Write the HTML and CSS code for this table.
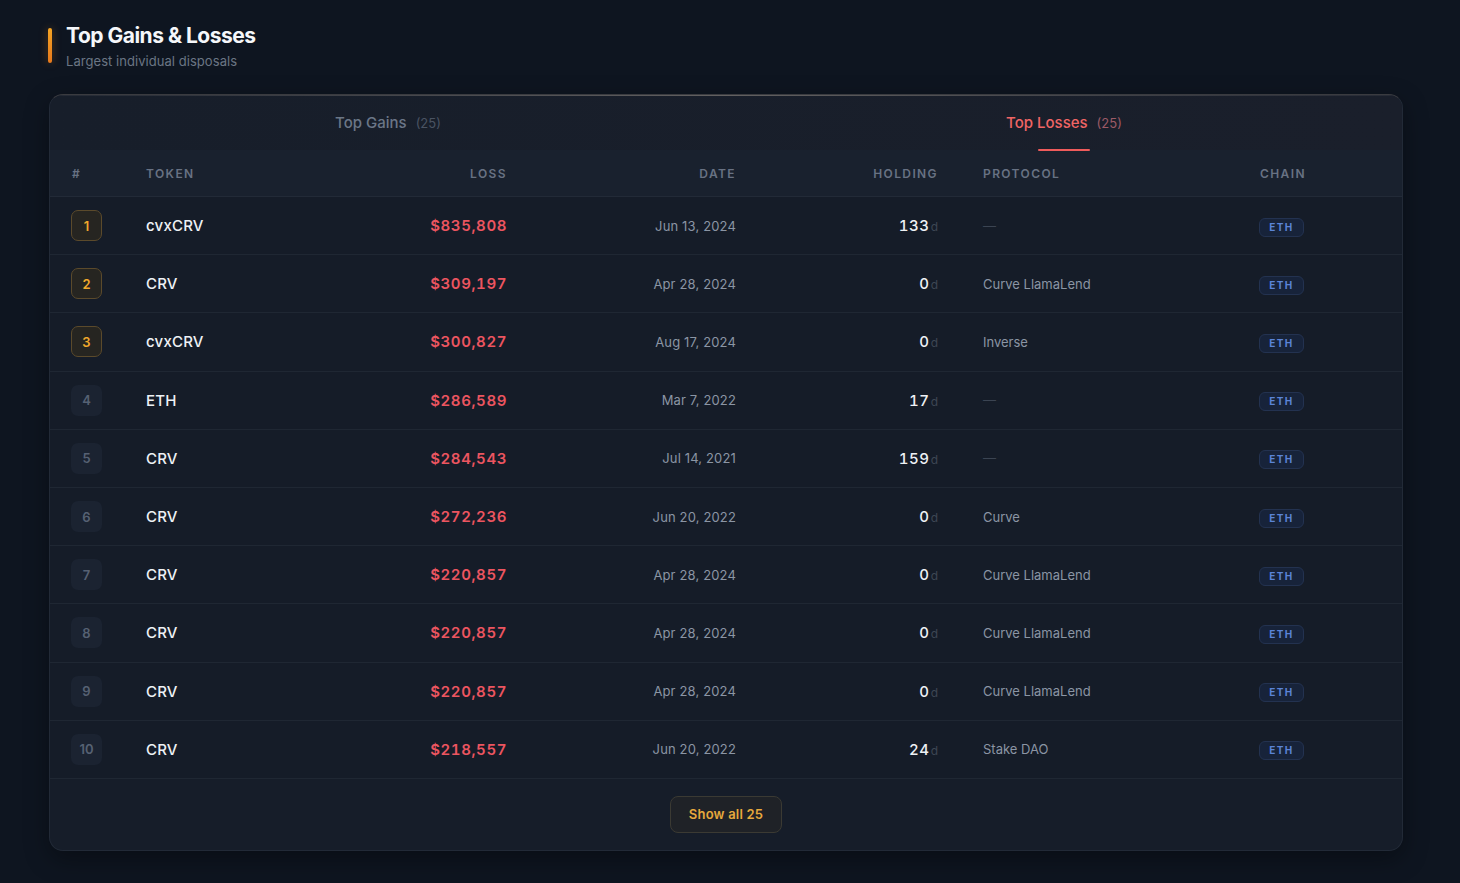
FILE: index.html
```html
<!DOCTYPE html>
<html lang="en">
<head>
<meta charset="utf-8">
<title>Top Gains &amp; Losses</title>
<link rel="stylesheet" href="styles.css">
</head>
<body>
<main class="page">
  <header class="section-head">
    <span class="accent-bar"></span>
    <div class="head-text">
      <h2 class="title">Top Gains &amp; Losses</h2>
      <p class="subtitle">Largest individual disposals</p>
    </div>
  </header>

  <section class="card">
    <nav class="tabs">
      <button class="tab">Top Gains <span class="count">(25)</span></button>
      <button class="tab active">Top Losses <span class="count">(25)</span></button>
    </nav>

    <div class="grid head-row">
      <div class="c-rank">#</div>
      <div class="c-token">TOKEN</div>
      <div class="c-right">LOSS</div>
      <div class="c-right">DATE</div>
      <div class="c-right">HOLDING</div>
      <div class="c-proto">PROTOCOL</div>
      <div class="c-chain">CHAIN</div>
    </div>

    <div class="grid row">
      <div class="c-rank"><span class="rank top">1</span></div>
      <div class="c-token token">cvxCRV</div>
      <div class="c-right loss">$835,808</div>
      <div class="c-right date">Jun 13, 2024</div>
      <div class="c-right hold">133<span class="unit">d</span></div>
      <div class="c-proto proto dash">—</div>
      <div class="c-chain"><span class="chain">ETH</span></div>
    </div>
    <div class="grid row">
      <div class="c-rank"><span class="rank top">2</span></div>
      <div class="c-token token">CRV</div>
      <div class="c-right loss">$309,197</div>
      <div class="c-right date">Apr 28, 2024</div>
      <div class="c-right hold">0<span class="unit">d</span></div>
      <div class="c-proto proto">Curve LlamaLend</div>
      <div class="c-chain"><span class="chain">ETH</span></div>
    </div>
    <div class="grid row">
      <div class="c-rank"><span class="rank top">3</span></div>
      <div class="c-token token">cvxCRV</div>
      <div class="c-right loss">$300,827</div>
      <div class="c-right date">Aug 17, 2024</div>
      <div class="c-right hold">0<span class="unit">d</span></div>
      <div class="c-proto proto">Inverse</div>
      <div class="c-chain"><span class="chain">ETH</span></div>
    </div>
    <div class="grid row">
      <div class="c-rank"><span class="rank">4</span></div>
      <div class="c-token token">ETH</div>
      <div class="c-right loss">$286,589</div>
      <div class="c-right date">Mar 7, 2022</div>
      <div class="c-right hold">17<span class="unit">d</span></div>
      <div class="c-proto proto dash">—</div>
      <div class="c-chain"><span class="chain">ETH</span></div>
    </div>
    <div class="grid row">
      <div class="c-rank"><span class="rank">5</span></div>
      <div class="c-token token">CRV</div>
      <div class="c-right loss">$284,543</div>
      <div class="c-right date">Jul 14, 2021</div>
      <div class="c-right hold">159<span class="unit">d</span></div>
      <div class="c-proto proto dash">—</div>
      <div class="c-chain"><span class="chain">ETH</span></div>
    </div>
    <div class="grid row">
      <div class="c-rank"><span class="rank">6</span></div>
      <div class="c-token token">CRV</div>
      <div class="c-right loss">$272,236</div>
      <div class="c-right date">Jun 20, 2022</div>
      <div class="c-right hold">0<span class="unit">d</span></div>
      <div class="c-proto proto">Curve</div>
      <div class="c-chain"><span class="chain">ETH</span></div>
    </div>
    <div class="grid row">
      <div class="c-rank"><span class="rank">7</span></div>
      <div class="c-token token">CRV</div>
      <div class="c-right loss">$220,857</div>
      <div class="c-right date">Apr 28, 2024</div>
      <div class="c-right hold">0<span class="unit">d</span></div>
      <div class="c-proto proto">Curve LlamaLend</div>
      <div class="c-chain"><span class="chain">ETH</span></div>
    </div>
    <div class="grid row">
      <div class="c-rank"><span class="rank">8</span></div>
      <div class="c-token token">CRV</div>
      <div class="c-right loss">$220,857</div>
      <div class="c-right date">Apr 28, 2024</div>
      <div class="c-right hold">0<span class="unit">d</span></div>
      <div class="c-proto proto">Curve LlamaLend</div>
      <div class="c-chain"><span class="chain">ETH</span></div>
    </div>
    <div class="grid row">
      <div class="c-rank"><span class="rank">9</span></div>
      <div class="c-token token">CRV</div>
      <div class="c-right loss">$220,857</div>
      <div class="c-right date">Apr 28, 2024</div>
      <div class="c-right hold">0<span class="unit">d</span></div>
      <div class="c-proto proto">Curve LlamaLend</div>
      <div class="c-chain"><span class="chain">ETH</span></div>
    </div>
    <div class="grid row">
      <div class="c-rank"><span class="rank">10</span></div>
      <div class="c-token token">CRV</div>
      <div class="c-right loss">$218,557</div>
      <div class="c-right date">Jun 20, 2022</div>
      <div class="c-right hold">24<span class="unit">d</span></div>
      <div class="c-proto proto">Stake DAO</div>
      <div class="c-chain"><span class="chain">ETH</span></div>
    </div>

    <div class="footer">
      <button class="show-all">Show all 25</button>
    </div>
  </section>
</main>
</body>
</html>
```

FILE: styles.css
```css
* { box-sizing: border-box; }

html, body {
  margin: 0;
  padding: 0;
}

body {
  background: #0e1520;
  font-family: Inter, "Noto Sans", "Liberation Sans", sans-serif;
  color: #e6e9ef;
  width: 1460px;
  height: 883px;
  overflow: hidden;
}

.page {
  padding: 24px 57px 0 49px;
}

.section-head {
  display: flex;
  align-items: flex-start;
  gap: 14px;
  margin-left: -1px;
}

.accent-bar {
  width: 4px;
  height: 35px;
  margin-top: 4px;
  border-radius: 2px;
  background: linear-gradient(180deg, #f5a524 0%, #e8791c 100%);
  box-shadow: 0 0 8px rgba(245, 140, 30, 0.35);
}

.head-text { display: flex; flex-direction: column; }

.title {
  margin: 0;
  font-size: 21px;
  line-height: 24px;
  font-weight: 700;
  letter-spacing: -0.5px;
  color: #f5f7fa;
}

.subtitle {
  margin: 5px 0 0;
  font-size: 13px;
  line-height: 16px;
  color: #6b7584;
  letter-spacing: 0.05px;
}

.card {
  margin-top: 25px;
  width: 1354px;
  height: 757px;
  border-radius: 14px;
  background: #161d29;
  border: 1px solid #222a37;
  border-top-color: #3a3b40;
  box-shadow: 0 8px 24px rgba(0, 0, 0, 0.35);
  overflow: hidden;
  position: relative;
}

.card::before {
  content: "";
  position: absolute;
  left: 0; right: 0; top: 0;
  height: 1px;
  background: linear-gradient(90deg, rgba(90,90,95,0.2), rgba(130,125,120,0.7) 50%, rgba(90,90,95,0.2));
}

.tabs {
  display: grid;
  grid-template-columns: 1fr 1fr;
  height: 55px;
  background: linear-gradient(90deg, #171e2a, #1a1f2b);
}

.tab {
  background: none;
  border: 0;
  font-family: inherit;
  font-size: 15px;
  font-weight: 500;
  color: #6b7687;
  padding: 0;
  position: relative;
  cursor: pointer;
  margin-top: -1px;
}

.tab .count {
  font-size: 13px;
  color: #4a5362;
  margin-left: 5px;
  font-weight: 400;
}

.tab.active { color: #f06565; }
.tab.active .count { color: #9c5a66; }

.tab.active::after {
  content: "";
  position: absolute;
  left: 50%;
  bottom: -1px;
  width: 52px;
  height: 2px;
  margin-left: -26px;
  background: #ef5b5b;
  border-radius: 1px;
}

.grid {
  display: grid;
  grid-template-columns: 75px 181px 180px 229px 202px 322px 121px;
  padding: 0 22px 0 21px;
  align-items: center;
}

.head-row {
  height: 47px;
  background: #19212e;
  border-bottom: 1px solid #222a37;
  font-size: 12px;
  font-weight: 600;
  letter-spacing: 1.4px;
  color: #687283;
}

.c-rank { padding-left: 1px; }
.row .c-rank { padding-left: 0; }
.c-right { text-align: right; }
.c-proto { padding-left: 45px; }

.row {
  height: 58.2px;
  border-bottom: 1px solid #1f2733;
  background: #151c28;
}

.rank {
  display: inline-flex;
  align-items: center;
  justify-content: center;
  width: 31px;
  height: 31px;
  border-radius: 7px;
  background: #1b2331;
  color: #566173;
  font-size: 13px;
  font-weight: 600;
}

.rank.top {
  background: #262521;
  border: 1px solid #5b4a2b;
  color: #f0a92c;
}

.token {
  font-size: 15px;
  font-weight: 500;
  color: #eef1f5;
  letter-spacing: 0.2px;
}

.loss {
  font-size: 15px;
  font-weight: 600;
  color: #ec5560;
  letter-spacing: 0.6px;
  font-variant-numeric: tabular-nums;
}

.date {
  font-size: 13px;
  color: #8b95a4;
  letter-spacing: 0.15px;
}

.hold {
  font-size: 15px;
  font-weight: 500;
  color: #eef1f5;
  letter-spacing: 0.6px;
  font-variant-numeric: tabular-nums;
}

.unit {
  font-size: 12px;
  color: #3e4754;
  margin-left: 1px;
  font-weight: 400;
  letter-spacing: 0;
}

.proto {
  font-size: 13px;
  color: #8b95a4;
  letter-spacing: 0;
}

.proto.dash { color: #3b4452; }

.chain {
  display: inline-block;
  width: 45px;
  height: 19px;
  line-height: 17px;
  text-align: center;
  border-radius: 6px;
  background: #17233a;
  border: 1px solid #233250;
  color: #5b84d6;
  font-size: 10px;
  font-weight: 700;
  letter-spacing: 1.4px;
  margin-left: -1px;
  margin-top: 2px;
}

.footer {
  display: flex;
  justify-content: center;
  padding-top: 17px;
}

.show-all {
  width: 112px;
  height: 37px;
  border-radius: 8px;
  background: #1f2227;
  border: 1px solid #3b3a33;
  color: #e7a93d;
  font-family: inherit;
  font-size: 13px;
  font-weight: 600;
  letter-spacing: 0.2px;
  cursor: pointer;
}
```
